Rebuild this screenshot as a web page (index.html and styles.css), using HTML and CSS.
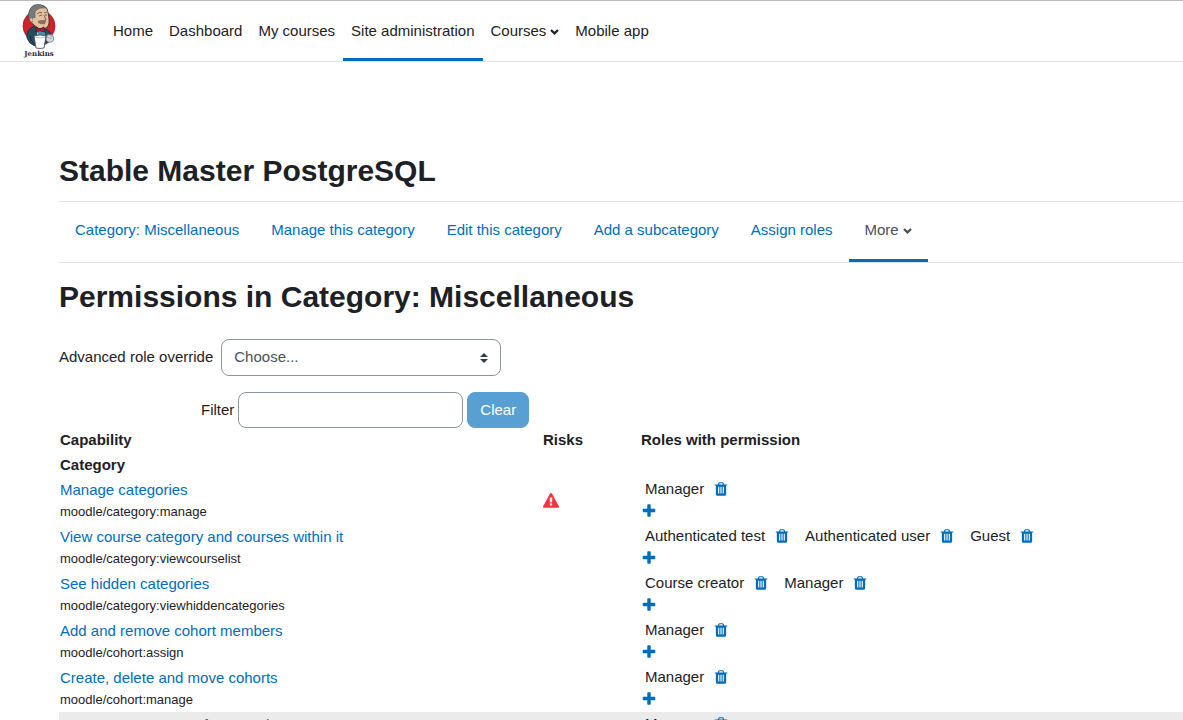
FILE: index.html
```html
<!DOCTYPE html>
<html lang="en">
<head>
    <meta charset="UTF-8">
    <meta name="viewport" content="width=device-width, initial-scale=1.0">
    <title>Permissions in Category: Miscellaneous</title>
    <link rel="stylesheet" href="styles.css">
</head>
<body>
    <!-- Shared icons -->
    <svg class="sprite" aria-hidden="true">
        <symbol id="icon-trash" viewBox="0 0 1792 1792">
            <path d="M704 1376v-704q0-14-9-23t-23-9h-64q-14 0-23 9t-9 23v704q0 14 9 23t23 9h64q14 0 23-9t9-23zm256 0v-704q0-14-9-23t-23-9h-64q-14 0-23 9t-9 23v704q0 14 9 23t23 9h64q14 0 23-9t9-23zm256 0v-704q0-14-9-23t-23-9h-64q-14 0-23 9t-9 23v704q0 14 9 23t23 9h64q14 0 23-9t9-23zm-544-992h448l-48-117q-7-9-17-11h-317q-10 2-17 11zm928 32v64q0 14-9 23t-23 9h-96v948q0 83-47 143.500t-113 60.500h-832q-66 0-113-58.500t-47-141.500v-952h-96q-14 0-23-9t-9-23v-64q0-14 9-23t23-9h309l70-167q15-37 54-63t79-26h320q40 0 79 26t54 63l70 167h309q14 0 23 9t9 23z"/>
        </symbol>
        <symbol id="icon-plus" viewBox="0 0 1792 1792">
            <path d="M1600 736v192q0 40-28 68t-68 28h-416v416q0 40-28 68t-68 28h-192q-40 0-68-28t-28-68v-416h-416q-40 0-68-28t-28-68v-192q0-40 28-68t68-28h416v-416q0-40 28-68t68-28h192q40 0 68 28t28 68v416h416q40 0 68 28t28 68z"/>
        </symbol>
        <symbol id="icon-warning" viewBox="0 0 1792 1792">
            <path d="M1024 1375v-190q0-14-9.500-23.500t-22.500-9.500h-192q-13 0-22.500 9.500t-9.500 23.500v190q0 14 9.500 23.500t22.500 9.500h192q13 0 22.500-9.500t9.500-23.500zm-2-374l18-459q0-12-10-19-13-11-24-11h-220q-11 0-24 11-10 7-10 21l17 457q0 10 10 16.500t24 6.500h185q14 0 23.500-6.500t10.500-16.500zm-14-934l768 1408q35 63-2 126-17 29-46.500 46t-63.500 17h-1536q-34 0-63.500-17t-46.500-46q-37-63-2-126l768-1408q17-31 47-49t65-18 65 18 47 49z"/>
        </symbol>
        <symbol id="icon-chevron" viewBox="0 0 9 9">
            <path d="M1 3L4.500 6.400L8 3" fill="none" stroke="currentColor" stroke-width="2.200"/>
        </symbol>
    </svg>

    <header class="navbar">
        <a href="#" class="brand">
            <svg class="logo" viewBox="0 0 34 54" role="img" aria-label="Jenkins">
                <ellipse cx="17" cy="22" rx="16" ry="16" fill="#d4202a" stroke="#7c2226" stroke-width=".7"/>
                <path d="M5 34Q4 27 9 24L14 21L23 24L28 28Q31 32 28 37L24 40L13 42Q7 40 5 34Z" fill="#234c5e" stroke="#1c2d37" stroke-width=".8"/>
                <path d="M14 22L17 26L23 26L23 33L19 34L15 30Z" fill="#e6ecee"/>
                <path d="M15 28L23 27L23 33L18 34Z" fill="#4a8da4"/>
                <path d="M7 11Q7 1 17 1Q25 1 26 8L27 15Q28 23 22 25Q16 26 12 21Q7 18 7 11Z" fill="#e3c0a2" stroke="#3c3432" stroke-width=".9"/>
                <path d="M7 16Q5 5 12 1Q19 -1 24 4Q16 3 13 8L13 14L11 13L10 19Z" fill="#77797b" stroke="#45494b" stroke-width=".5"/>
                <path d="M10 14Q7 13 8 17Q10 19 11 17" fill="#e3c0a2" stroke="#755947" stroke-width=".5"/>
                <path d="M15 10Q18 7 20 9M22 9L25 8M17 12L20 11M23 11L25 11M22 11L24 16L21 17" fill="none" stroke="#4c3932" stroke-width=".7"/>
                <path d="M16 17Q20 15 24 17L23 20Q20 21 16 19Z" fill="#8f6e5b"/>
                <path d="M14 23L18 25L22 23L23 28L18 27L14 28Z" fill="#b5182d" stroke="#351c24" stroke-width=".8"/>
                <path d="M8 32Q9 38 13 40" fill="none" stroke="#152c38" stroke-width=".8"/>
                <path d="M25 31Q29 29 31 32Q33 37 29 38Q25 39 24 35Z" fill="#d9dddd" stroke="#59636a" stroke-width=".7"/>
                <path d="M25 33L30 35M27 31L30 33" stroke="#808991" stroke-width=".6"/>
                <path d="M12 32Q18 30 24 32L22 44Q18 45 14 44Z" fill="#fff" stroke="#4e5458" stroke-width=".9"/>
                <path d="M13 33Q18 35 23 33" fill="none" stroke="#a0a5a6" stroke-width=".6"/>
                <text x="17" y="52" text-anchor="middle" class="logo-text">Jenkins</text>
            </svg>
        </a>
        <nav class="primary-nav">
            <a href="#">Home</a>
            <a href="#">Dashboard</a>
            <a href="#">My courses</a>
            <a href="#" class="active">Site administration</a>
            <a href="#">Courses <svg class="chevron"><use href="#icon-chevron"/></svg></a>
            <a href="#">Mobile app</a>
        </nav>
    </header>

    <main class="page">
        <h1>Stable Master PostgreSQL</h1>

        <nav class="secondary-nav">
            <a href="#">Category: Miscellaneous</a>
            <a href="#">Manage this category</a>
            <a href="#">Edit this category</a>
            <a href="#">Add a subcategory</a>
            <a href="#">Assign roles</a>
            <a href="#" class="active">More <svg class="chevron"><use href="#icon-chevron"/></svg></a>
        </nav>

        <h2>Permissions in Category: Miscellaneous</h2>

        <form class="override-form">
            <label for="override">Advanced role override</label>
            <div class="select-wrap">
                <select id="override">
                    <option>Choose...</option>
                </select>
                <svg class="select-arrows" viewBox="0 0 8 10"><path d="M0 4L4 0L8 4ZM0 6L4 10L8 6Z"/></svg>
            </div>
        </form>

        <form class="filter-form">
            <label for="filter">Filter</label>
            <input type="text" id="filter">
            <button type="button" disabled>Clear</button>
        </form>

        <table class="permissions">
            <colgroup>
                <col class="col-capability">
                <col class="col-risks">
                <col>
            </colgroup>
            <thead>
                <tr><th>Capability</th><th>Risks</th><th>Roles with permission</th></tr>
            </thead>
            <tbody>
                <tr><th colspan="3">Category</th></tr>
                <tr>
                    <td><a href="#">Manage categories</a><small>moodle/category:manage</small></td>
                    <td><a href="#" class="risk" aria-label="Risks"><svg class="icon"><use href="#icon-warning"/></svg></a></td>
                    <td>
                        <div class="roles">
                            <span class="role">Manager <a href="#" aria-label="Delete Manager"><svg class="icon"><use href="#icon-trash"/></svg></a></span>
                        </div>
                        <a href="#" class="add" aria-label="Allow role"><svg class="icon"><use href="#icon-plus"/></svg></a>
                    </td>
                </tr>
                <tr>
                    <td><a href="#">View course category and courses within it</a><small>moodle/category:viewcourselist</small></td>
                    <td></td>
                    <td>
                        <div class="roles">
                            <span class="role">Authenticated test <a href="#" aria-label="Delete Authenticated test"><svg class="icon"><use href="#icon-trash"/></svg></a></span>
                            <span class="role">Authenticated user <a href="#" aria-label="Delete Authenticated user"><svg class="icon"><use href="#icon-trash"/></svg></a></span>
                            <span class="role">Guest <a href="#" aria-label="Delete Guest"><svg class="icon"><use href="#icon-trash"/></svg></a></span>
                        </div>
                        <a href="#" class="add" aria-label="Allow role"><svg class="icon"><use href="#icon-plus"/></svg></a>
                    </td>
                </tr>
                <tr>
                    <td><a href="#">See hidden categories</a><small>moodle/category:viewhiddencategories</small></td>
                    <td></td>
                    <td>
                        <div class="roles">
                            <span class="role">Course creator <a href="#" aria-label="Delete Course creator"><svg class="icon"><use href="#icon-trash"/></svg></a></span>
                            <span class="role">Manager <a href="#" aria-label="Delete Manager"><svg class="icon"><use href="#icon-trash"/></svg></a></span>
                        </div>
                        <a href="#" class="add" aria-label="Allow role"><svg class="icon"><use href="#icon-plus"/></svg></a>
                    </td>
                </tr>
                <tr>
                    <td><a href="#">Add and remove cohort members</a><small>moodle/cohort:assign</small></td>
                    <td></td>
                    <td>
                        <div class="roles">
                            <span class="role">Manager <a href="#" aria-label="Delete Manager"><svg class="icon"><use href="#icon-trash"/></svg></a></span>
                        </div>
                        <a href="#" class="add" aria-label="Allow role"><svg class="icon"><use href="#icon-plus"/></svg></a>
                    </td>
                </tr>
                <tr>
                    <td><a href="#">Create, delete and move cohorts</a><small>moodle/cohort:manage</small></td>
                    <td></td>
                    <td>
                        <div class="roles">
                            <span class="role">Manager <a href="#" aria-label="Delete Manager"><svg class="icon"><use href="#icon-trash"/></svg></a></span>
                        </div>
                        <a href="#" class="add" aria-label="Allow role"><svg class="icon"><use href="#icon-plus"/></svg></a>
                    </td>
                </tr>
                <tr class="highlight">
                    <td><a href="#">Manage competency frameworks</a><small>moodle/competency:competencymanage</small></td>
                    <td></td>
                    <td>
                        <div class="roles">
                            <span class="role">Manager <a href="#" aria-label="Delete Manager"><svg class="icon"><use href="#icon-trash"/></svg></a></span>
                        </div>
                        <a href="#" class="add" aria-label="Allow role"><svg class="icon"><use href="#icon-plus"/></svg></a>
                    </td>
                </tr>
            </tbody>
        </table>
    </main>
</body>
</html>
```
FILE: styles.css
```css
* {
    margin: 0;
    padding: 0;
    box-sizing: border-box;
}

body {
    font-family: "Liberation Sans", Arial, sans-serif;
    font-size: 15px;
    line-height: 23px;
    color: #1d2125;
    background: #fff;
    border-top: 1px solid #bbb;
}

a {
    color: #006dbc;
    text-decoration: none;
}

.sprite {
    display: none;
}

.icon {
    width: 16px;
    height: 16px;
    display: block;
    fill: currentColor;
}

.chevron {
    width: 9px;
    height: 9px;
    margin: 3px 0 0 4px;
}

/* Top bar */
.navbar {
    display: flex;
    height: 61px;
    padding-left: 22px;
    border-bottom: 1px solid #dee2e6;
}

.brand {
    width: 83px;
    padding-top: 3px;
}

.logo {
    width: 34px;
    height: 54px;
    display: block;
    overflow: visible;
}

.logo-text {
    font-family: "DejaVu Serif", serif;
    font-size: 7px;
    font-weight: bold;
    fill: #2b2b2b;
}

.primary-nav,
.secondary-nav {
    display: flex;
}

.primary-nav a,
.secondary-nav a {
    display: flex;
    align-items: center;
    white-space: nowrap;
    border-top: 3px solid transparent;
    border-bottom: 3px solid transparent;
}

.primary-nav a {
    padding: 0 8px 2px;
    color: #1d2125;
}

.primary-nav a.active,
.secondary-nav a.active {
    border-bottom-color: #006dbc;
}

/* Page */
.page {
    padding: 91px 0 0 59px;
}

h1,
h2 {
    font-size: 30px;
    line-height: 36px;
    font-weight: bold;
}

h1 {
    margin-bottom: 12px;
}

.secondary-nav {
    height: 62px;
    margin-bottom: 16px;
    border-top: 1px solid #dee2e6;
    border-bottom: 1px solid #dee2e6;
}

.secondary-nav a {
    padding: 0 16px 6px;
}

.secondary-nav a.active {
    color: #495057;
}

/* Forms */
.override-form {
    display: flex;
    align-items: center;
    gap: 8px;
    margin: 24px 0 16px;
}

label {
    padding-bottom: 2px;
}

.select-wrap {
    position: relative;
    width: 280px;
}

select,
input,
button {
    height: 36px;
    padding: 0 12px 2px;
    font: inherit;
    border: 1px solid #8f959e;
    border-radius: 8px;
    background: #fff;
}

select {
    width: 100%;
    height: 37px;
    color: #495057;
    appearance: none;
}

.select-arrows {
    position: absolute;
    top: 14px;
    right: 13px;
    width: 8px;
    height: 10px;
    fill: #343a40;
    pointer-events: none;
}

.filter-form {
    display: flex;
    align-items: center;
    gap: 4px;
    padding-left: 142px;
}

input {
    width: 225px;
}

button {
    color: #fff;
    background: #006dbc;
    border-color: #006dbc;
    opacity: 0.65;
}

/* Permissions table */
.permissions {
    width: 100%;
    margin-top: -1px;
    table-layout: fixed;
    border-collapse: collapse;
}

.col-capability {
    width: 483px;
}

.col-risks {
    width: 98px;
}

.permissions th,
.permissions td {
    padding: 1px;
    text-align: left;
}

.permissions td {
    vertical-align: top;
}

.permissions small {
    display: block;
    font-size: 13px;
    line-height: 22px;
}

.permissions .risk {
    display: block;
    margin-top: 15px;
    color: #ff3042;
}

.roles {
    display: flex;
    gap: 12px;
    padding-left: 4px;
    line-height: 22px;
}

.role {
    display: flex;
    align-items: center;
    gap: 9px;
    padding-right: 3px;
}

.role .icon {
    margin-bottom: 1px;
}

.add {
    display: block;
    width: 16px;
    margin-top: 3px;
}

.highlight {
    background: #ebebeb;
}
```
